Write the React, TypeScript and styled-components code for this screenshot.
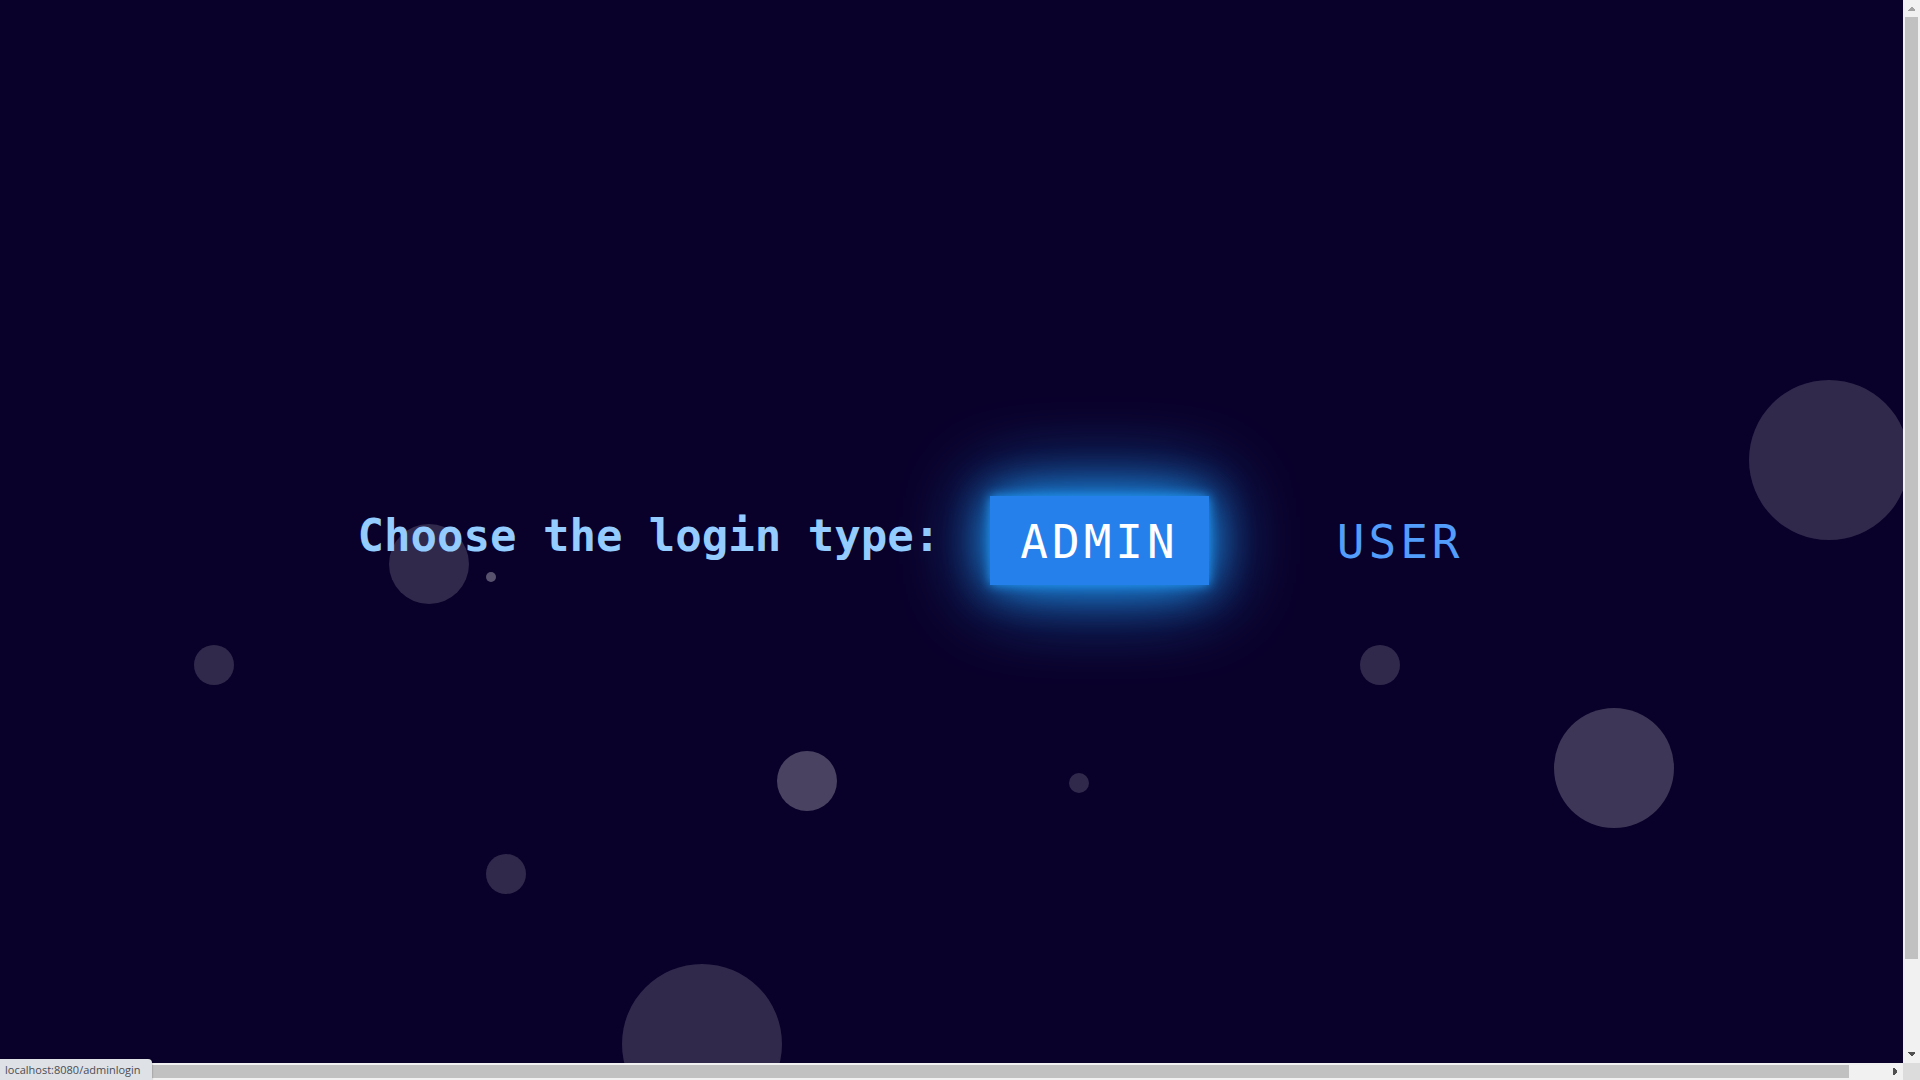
import React from "react";
import styled, { createGlobalStyle } from "styled-components";

const GlobalStyle = createGlobalStyle`
  * { box-sizing: border-box; }
  body { margin: 0; background: #0a012a; overflow: hidden; }
`;

const mono = `"DejaVu Sans Mono", "Liberation Mono", monospace`;

const Frame = styled.div`
  position: relative;
  display: grid;
  grid-template-columns: 1fr 17px;
  grid-template-rows: 1fr 17px;
  height: 100vh;
`;

const Stage = styled.main`
  position: relative;
  overflow: hidden;
  display: flex;
  align-items: center;
  justify-content: center;
  padding: 18px 52px 0 0;
  background: #0a012a;
`;

const Bubble = styled.span<{ $x: number; $y: number; $size: number; $alpha: number }>`
  position: absolute;
  left: ${(p) => p.$x}px;
  top: ${(p) => p.$y}px;
  width: ${(p) => p.$size}px;
  height: ${(p) => p.$size}px;
  border-radius: 50%;
  background: rgba(255, 255, 255, ${(p) => p.$alpha});
`;

const Chooser = styled.nav`
  position: relative;
  display: flex;
  align-items: center;
  white-space: nowrap;
`;

const Prompt = styled.h1`
  margin: 0 50px 0 0;
  padding-bottom: 10px;
  font: bold 44px/52px ${mono};
  color: #94ccff;
`;

const Choices = styled.div`
  display: flex;
  gap: 98px;
`;

const Choice = styled.a<{ $active?: boolean }>`
  padding: 18px 30px 14px;
  font: 46px/57px ${mono};
  letter-spacing: 4px;
  text-decoration: none;
  color: ${(p) => (p.$active ? "#ffffff" : "#539dfd")};
  background: ${(p) => (p.$active ? "#2580eb" : "transparent")};
  box-shadow: ${(p) =>
    p.$active
      ? "0 0 10px #2196f3, 0 0 45px #2196f3, 0 0 90px #2196f3"
      : "none"};
`;

const Track = styled.div<{ $vertical?: boolean }>`
  display: flex;
  flex-direction: ${(p) => (p.$vertical ? "column" : "row")};
  background: #f1f1f1;
`;

const ArrowBox = styled.span`
  flex: none;
  display: flex;
  width: 17px;
  height: 17px;
`;

const Rail = styled.div<{ $vertical?: boolean }>`
  flex: 1;
  padding: ${(p) => (p.$vertical ? "0 2px" : "2px 0")};
`;

const Thumb = styled.div<{ $vertical?: boolean }>`
  width: ${(p) => (p.$vertical ? "100%" : "98%")};
  height: ${(p) => (p.$vertical ? "91.5%" : "100%")};
  background: #c1c1c1;
`;

const Corner = styled.div`
  background: #dcdcdc;
`;

const LinkStatus = styled.div`
  position: absolute;
  left: 0;
  bottom: 0;
  height: 21px;
  min-width: 152px;
  padding: 0 6px 0 5px;
  border-top-right-radius: 4px;
  box-shadow: 0 0 2px rgba(0, 0, 0, 0.4);
  background: #dee1e6;
  color: #4a4d52;
  font: 11px/21px "Open Sans", "Noto Sans", sans-serif;
`;

const bubbles = [
  { x: 1749, y: 380, size: 160, alpha: 0.16 },
  { x: 389, y: 524, size: 80, alpha: 0.16 },
  { x: 486, y: 572, size: 10, alpha: 0.32 },
  { x: 194, y: 645, size: 40, alpha: 0.16 },
  { x: 486, y: 854, size: 40, alpha: 0.16 },
  { x: 777, y: 751, size: 60, alpha: 0.26 },
  { x: 1069, y: 773, size: 20, alpha: 0.16 },
  { x: 622, y: 964, size: 160, alpha: 0.16 },
  { x: 1360, y: 645, size: 40, alpha: 0.16 },
  { x: 1554, y: 708, size: 120, alpha: 0.21 },
];

function Arrow({ d, color = "#505050" }: { d: string; color?: string }) {
  return (
    <ArrowBox>
      <svg width="17" height="17" viewBox="0 0 17 17" shapeRendering="crispEdges" aria-hidden="true">
        <path d={d} fill={color} />
      </svg>
    </ArrowBox>
  );
}

export default function App() {
  return (
    <>
      <GlobalStyle />
      <Frame>
        <Stage>
          {bubbles.map((b) => (
            <Bubble key={`${b.x}-${b.y}`} $x={b.x} $y={b.y} $size={b.size} $alpha={b.alpha} />
          ))}
          <Chooser>
            <Prompt>Choose the login type:</Prompt>
            <Choices>
              <Choice href="/adminlogin" $active>ADMIN</Choice>
              <Choice href="/userlogin">USER</Choice>
            </Choices>
          </Chooser>
        </Stage>
        <Track $vertical>
          <Arrow d="M5 11 V10 L8 7 H9 L12 10 V11 Z" color="#a3a3a3" />
          <Rail $vertical><Thumb $vertical /></Rail>
          <Arrow d="M5 6 H12 V7 L9 10 H8 L5 7 Z" />
        </Track>
        <Track>
          <Arrow d="M10 5 V12 H9 L6 9 V8 L9 5 Z" color="#a3a3a3" />
          <Rail><Thumb /></Rail>
          <Arrow d="M7 5 H8 L11 8 V9 L8 12 H7 Z" />
        </Track>
        <Corner />
        <LinkStatus>localhost:8080/adminlogin</LinkStatus>
      </Frame>
    </>
  );
}
